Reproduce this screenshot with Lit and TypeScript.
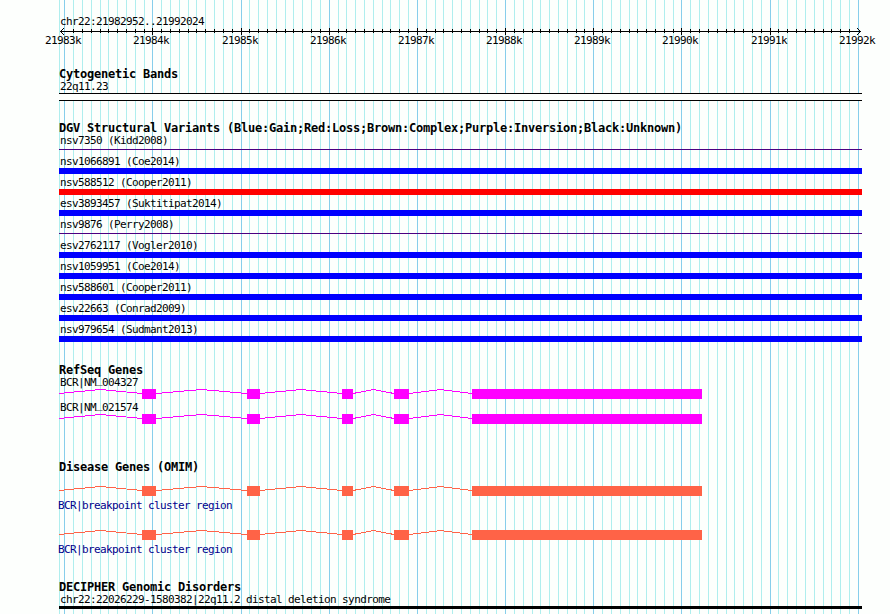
import { LitElement, html, css, svg } from "lit";
import { customElement, property } from "lit/decorators.js";

const LEFT = 59;
const RIGHT = 862;
const STEP = 8.817;
const FIRST = 64.742;

const lineX = (n: number) => Math.floor(FIRST + n * STEP);
const TICKS = Array.from({ length: 91 }, (_, n) => ({ x: lineX(n), major: n % 10 === 0, n }));

const EXONS = [
  [142, 156],
  [247, 260],
  [342, 353],
  [394, 409],
  [472, 702],
];

const VARIANTS = [
  ["nsv7350 (Kidd2008)", "thin"],
  ["nsv1066891 (Coe2014)", "gain"],
  ["nsv588512 (Cooper2011)", "loss"],
  ["esv3893457 (Suktitipat2014)", "gain"],
  ["nsv9876 (Perry2008)", "thin"],
  ["esv2762117 (Vogler2010)", "gain"],
  ["nsv1059951 (Coe2014)", "gain"],
  ["nsv588601 (Cooper2011)", "gain"],
  ["esv22663 (Conrad2009)", "gain"],
  ["nsv979654 (Sudmant2013)", "gain"],
];

@customElement("gene-model")
export class GeneModel extends LitElement {
  @property() declare color: string;

  static override styles = css`
    :host {
      display: block;
      height: 10px;
    }

    svg {
      display: block;
    }
  `;

  override render() {
    let start = LEFT;
    const introns = EXONS.map(([from, to]) => {
      const a = start - LEFT;
      const b = from - LEFT;
      start = to;
      return `M${a} 4.5L${(a + b) / 2} 0.5L${b} 4.5`;
    }).join("");
    return html`
      <svg width=${RIGHT - LEFT} height="10" shape-rendering="crispEdges">
        <path d=${introns} fill="none" stroke=${this.color}></path>
        ${EXONS.map(
          ([from, to]) => svg`<rect x=${from - LEFT} y="0" width=${to - from} height="10" fill=${this.color}></rect>`
        )}
      </svg>
    `;
  }
}

@customElement("scale-ruler")
export class ScaleRuler extends LitElement {
  static override styles = css`
    :host {
      display: block;
      height: 20px;
    }

    svg {
      display: block;
    }

    text {
      font: 11px "DejaVu Sans Mono", monospace;
      letter-spacing: -0.62px;
    }
  `;

  override render() {
    return html`
      <svg width="890" height="20">
        <g shape-rendering="crispEdges">
          <rect x="60" y="4" width="801" height="1"></rect>
          ${TICKS.slice(1, -1).map(({ x, major }) =>
            major
              ? svg`<rect x=${x} y="1" width="1" height="7"></rect>`
              : svg`<rect x=${x} y="2" width="1" height="4"></rect>`
          )}
        </g>
        <path d="M64 1L60.5 4.5L64 8M857 1L860.5 4.5L857 8" fill="none" stroke="#000"></path>
        ${TICKS.filter((t) => t.major).map(
          ({ x, n }) => svg`<text x=${x - 19} y="17">${21983 + n / 10}k</text>`
        )}
      </svg>
    `;
  }
}

@customElement("app-root")
export class AppRoot extends LitElement {
  static override styles = css`
    :host {
      display: grid;
      width: 890px;
      height: 614px;
      overflow: hidden;
      background: #fdfffd;
      color: #000;
      font: 11px/14px "DejaVu Sans Mono", monospace;
      letter-spacing: -0.62px;
      white-space: nowrap;
    }

    .grid,
    .tracks {
      grid-area: 1 / 1;
      display: block;
      min-width: 0;
    }

    .tracks {
      display: flow-root;
      z-index: 1;
    }

    .region {
      padding: 15px 0 0 60px;
      height: 12px;
    }

    .track {
      width: 803px;
      margin-left: 59px;
    }

    h2 {
      margin: 0;
      height: 12px;
      font: bold 12px/12px "DejaVu Sans Mono", monospace;
      letter-spacing: -0.225px;
    }

    .label {
      height: 12px;
      padding-left: 1px;
    }

    .cyto {
      margin-top: 21px;
    }

    .band {
      box-sizing: border-box;
      height: 8px;
      margin-top: 1px;
      border: solid #000;
      border-width: 1px 0;
      background: #fdfffd;
    }

    .variants {
      margin-top: 21px;
    }

    .variant {
      height: 21px;
    }

    .bar {
      height: 6px;
      margin-top: 1px;
    }

    .gain {
      background: #00f;
    }

    .loss {
      background: #f00;
    }

    .thin {
      height: 1px;
      margin-top: 3px;
      background: #4b0082;
    }

    .genes {
      margin-top: 20px;
    }

    .genes .label {
      margin-bottom: 1px;
    }

    .genes .gene {
      height: 25px;
    }

    .underscore {
      line-height: 0;
      vertical-align: 3px;
    }

    .omim {
      margin-top: 35px;
    }

    .disease {
      height: 31px;
      padding-top: 13px;
      color: #00008b;
    }

    .disease .label {
      margin-top: 3px;
      padding-left: 0;
      text-indent: -1px;
    }

    .decipher {
      margin-top: 20px;
    }

    .deletion {
      height: 3px;
      margin-top: 1px;
      background: #000;
    }
  `;

  override render() {
    return html`
      <svg class="grid" width="890" height="614" shape-rendering="crispEdges">
        <rect x=${LEFT} y="0" width="1" height="614" fill="#afeeee"></rect>
        ${TICKS.map(
          ({ x, major }) =>
            svg`<rect x=${x} y="0" width="1" height="614" fill=${major ? "#87ceeb" : "#afeeee"}></rect>`
        )}
      </svg>
      <div class="tracks">
        <div class="region">chr22:21982952..21992024</div>
        <scale-ruler></scale-ruler>
        <section class="track cyto">
          <h2>Cytogenetic Bands</h2>
          <div class="label">22q11.23</div>
          <div class="band"></div>
        </section>
        <section class="track variants">
          <h2>DGV Structural Variants (Blue:Gain;Red:Loss;Brown:Complex;Purple:Inversion;Black:Unknown)</h2>
          ${VARIANTS.map(
            ([name, kind]) => html`
              <div class="variant">
                <div class="label">${name}</div>
                <div class="bar ${kind}"></div>
              </div>
            `
          )}
        </section>
        <section class="track genes">
          <h2>RefSeq Genes</h2>
          ${["004327", "021574"].map(
            (id) => html`
              <div class="gene">
                <div class="label">BCR|NM<span class="underscore">_</span>${id}</div>
                <gene-model color="#ff00ff"></gene-model>
              </div>
            `
          )}
        </section>
        <section class="track omim">
          <h2>Disease Genes (OMIM)</h2>
          ${[0, 1].map(
            () => html`
              <div class="disease">
                <gene-model color="#ff6347"></gene-model>
                <div class="label">BCR|breakpoint cluster region</div>
              </div>
            `
          )}
        </section>
        <section class="track decipher">
          <h2>DECIPHER Genomic Disorders</h2>
          <div class="label">chr22:22026229-1580382|22q11.2 distal deletion syndrome</div>
          <div class="deletion"></div>
        </section>
      </div>
    `;
  }
}
